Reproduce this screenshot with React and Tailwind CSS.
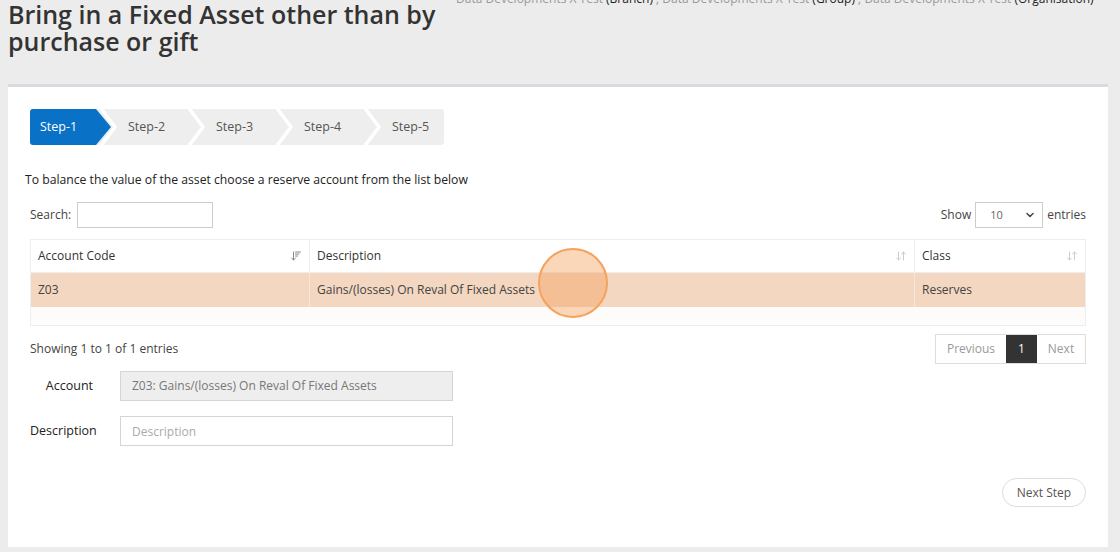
import { ArrowDownUp, ArrowDownWideNarrow, ChevronDown } from 'lucide-react'

const steps = ['Step-1', 'Step-2', 'Step-3', 'Step-4', 'Step-5']

function StepBar() {
  return (
    <div className="relative w-[414px] h-9 rounded-[3px] overflow-hidden bg-[#eeeeee]">
      <svg className="absolute inset-0" width="414" height="36" viewBox="0 0 414 36">
        <polygon points="0,0 66,0 81,18 66,36 0,36" fill="#0a72c6" />
        {[1, 2, 3, 4].map(i => (
          <polyline
            key={i}
            points={`${88 * i - 18},-2 ${88 * i - 3},18 ${88 * i - 18},38`}
            fill="none"
            stroke="#ffffff"
            strokeWidth="3.5"
          />
        ))}
      </svg>
      <div className="relative flex h-full">
        {steps.map((s, i) => (
          <div
            key={s}
            className={`w-[88px] shrink-0 h-full flex items-center pl-[10px] text-[12.5px] ${
              i === 0 ? 'text-white' : 'text-[#555]'
            }`}
          >
            {s}
          </div>
        ))}
      </div>
    </div>
  )
}

function App() {
  return (
    <div
      className="w-[1120px] h-[552px] overflow-hidden bg-[#edecec] text-[#333]"
      style={{ fontFamily: '"Open Sans", "Liberation Sans", sans-serif' }}
    >
      <div className="flex pl-2">
        <h1 className="w-[446px] shrink-0 pt-[1px] text-[25px] leading-[27px] font-semibold text-[#333]">
          Bring in a Fixed Asset other than by purchase or gift
        </h1>
        <div className="ml-[2px] -mt-[10px] text-[12px] leading-[18px] whitespace-nowrap text-[#999]">
          Data Developments X Test <span className="text-[#222]">(Branch)</span> ; Data Developments X Test{' '}
          <span className="text-[#222]">(Group)</span> ; Data Developments X Test{' '}
          <span className="text-[#222]">(Organisation)</span>
        </div>
      </div>

      <div className="ml-2 mt-[29px] w-[1100px] h-[463px] bg-white border-t-[3px] border-[#d8dbe0] relative">
        <div className="pl-[22px] pt-[22px]">
          <StepBar />
        </div>

        <p className="ml-[17px] mt-[26px] text-[12.2px] leading-[18px] text-[#222]">
          To balance the value of the asset choose a reserve account from the list below
        </p>

        <div className="mx-[22px] mt-[13px] flex items-center justify-between text-[12px] text-[#444]">
          <div className="flex items-center gap-[6px]">
            <span>Search:</span>
            <input className="w-[136px] h-[26px] border border-[#ccc] outline-none" />
          </div>
          <div className="flex items-center gap-1">
            <span>Show</span>
            <div className="w-[68px] h-[26px] border border-[#ccc] flex items-center justify-between pl-[14px] pr-[6px] text-[11px] text-[#666]">
              <span>10</span>
              <ChevronDown size={12} strokeWidth={3} className="text-[#444]" />
            </div>
            <span>entries</span>
          </div>
        </div>

        <div className="mx-[22px] mt-[11px] border border-[#eeeeee] text-[12px]">
          <div className="flex h-[33px] border-b border-[#eeeeee] text-[#333]">
            <div className="w-[279px] flex items-center justify-between pl-[7px] pr-[7px] border-r border-[#eeeeee]">
              <span>Account Code</span>
              <ArrowDownWideNarrow size={12} className="text-[#888]" />
            </div>
            <div className="w-[605px] flex items-center justify-between pl-[7px] pr-[7px] border-r border-[#eeeeee]">
              <span>Description</span>
              <ArrowDownUp size={12} className="text-[#ccc]" />
            </div>
            <div className="flex-1 flex items-center justify-between pl-[7px] pr-[7px]">
              <span>Class</span>
              <ArrowDownUp size={12} className="text-[#ccc]" />
            </div>
          </div>
          <div className="flex h-[34px] bg-[#f3d7c0] text-[#444]">
            <div className="w-[279px] flex items-center pl-[7px] border-r border-[#f8e6d8]">Z03</div>
            <div className="w-[605px] flex items-center pl-[7px] border-r border-[#f8e6d8]">
              Gains/(losses) On Reval Of Fixed Assets
            </div>
            <div className="flex-1 flex items-center pl-[7px]">Reserves</div>
          </div>
          <div className="h-[18px] bg-[#fdfcfb]" />
        </div>

        <div className="mx-[22px] mt-[8px] flex items-center justify-between text-[12px] text-[#444]">
          <span>Showing 1 to 1 of 1 entries</span>
          <div className="flex h-[30px] border border-[#dddddd] text-[#999]">
            <span className="w-[70px] flex items-center justify-center">Previous</span>
            <span className="w-[31px] flex items-center justify-center bg-[#333] text-white">1</span>
            <span className="w-[48px] flex items-center justify-center">Next</span>
          </div>
        </div>

        <div className="ml-[22px] mt-[7px] flex items-center text-[12.5px] text-[#222]">
          <span className="w-[63px] text-right">Account</span>
          <div className="ml-[27px] w-[333px] h-[30px] bg-[#eeeeee] border border-[#d5d5d5] flex items-center px-[11px] text-[12px] text-[#777]">
            Z03: Gains/(losses) On Reval Of Fixed Assets
          </div>
        </div>
        <div className="ml-[22px] mt-[15px] flex items-center text-[12.5px] text-[#222]">
          <span className="w-[65px] text-right">Description</span>
          <input
            placeholder="Description"
            className="ml-[25px] w-[333px] h-[30px] border border-[#d5d5d5] px-[11px] text-[12px] outline-none placeholder:text-[#aaa]"
          />
        </div>

        <div className="mr-[22px] mt-[32px] flex justify-end">
          <button className="w-[84px] h-[29px] rounded-full border border-[#dddddd] text-[12px] text-[#555]">
            Next Step
          </button>
        </div>

        <div className="absolute left-[530px] top-[161px] w-[70px] h-[70px] rounded-full border-2 border-[#f4a25c] bg-[#f59a52]/40" />
      </div>
    </div>
  )
}

export default App
